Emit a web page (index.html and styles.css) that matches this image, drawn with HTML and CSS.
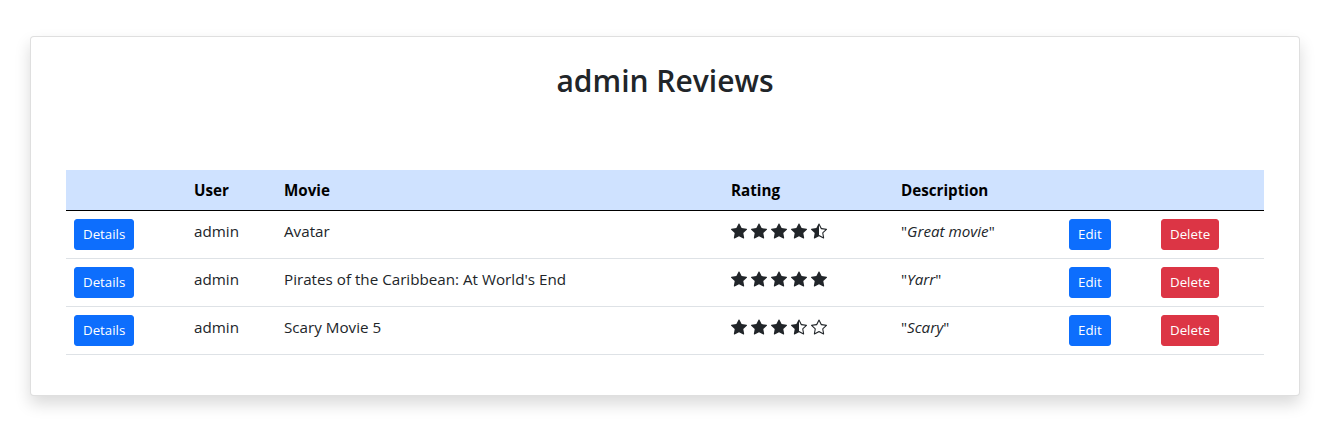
FILE: index.html
```html
<!DOCTYPE html>
<html lang="en">
<head>
<meta charset="utf-8">
<title>admin Reviews</title>
<link rel="stylesheet" href="styles.css">
</head>
<body>
<svg width="0" height="0" class="defs" aria-hidden="true">
  <defs>
    <symbol id="sf" viewBox="0 0 16 16"><path d="M3.612 15.443c-.386.198-.824-.149-.746-.592l.83-4.73L.173 6.765c-.329-.314-.158-.888.283-.95l4.898-.696L7.538.792c.197-.39.73-.39.927 0l2.184 4.327 4.898.696c.441.062.612.636.282.95l-3.522 3.356.83 4.73c.078.443-.36.79-.746.592L8 13.187l-4.389 2.256z"/></symbol>
    <symbol id="sh" viewBox="0 0 16 16"><path d="M5.354 5.119 7.538.792A.516.516 0 0 1 8 .5c.183 0 .366.097.465.292l2.184 4.327 4.898.696A.537.537 0 0 1 16 6.32a.548.548 0 0 1-.17.445l-3.523 3.356.83 4.730c.078.443-.36.79-.746.592L8 13.187l-4.389 2.256a.52.52 0 0 1-.146.05c-.342.06-.668-.254-.6-.642l.83-4.73L.173 6.765a.55.55 0 0 1-.172-.403.58.58 0 0 1 .085-.302.513.513 0 0 1 .37-.245l4.898-.696zM8 12.027a.5.5 0 0 1 .232.056l3.686 1.894-.694-3.957a.565.565 0 0 1 .162-.505l2.907-2.77-4.052-.576a.525.525 0 0 1-.393-.288L8.001 2.223 8 2.226v9.8z"/></symbol>
    <symbol id="se" viewBox="0 0 16 16"><path d="M2.866 14.85c-.078.444.36.791.746.593l4.39-2.256 4.389 2.256c.386.198.824-.149.746-.592l-.83-4.73 3.522-3.356c.33-.314.16-.888-.282-.95l-4.898-.696L8.465.792a.513.513 0 0 0-.927 0L5.354 5.12l-4.898.696c-.441.062-.612.636-.283.95l3.523 3.356-.83 4.73zm4.905-2.767-3.686 1.894.694-3.957a.565.565 0 0 0-.163-.505L1.710 6.745l4.052-.576a.525.525 0 0 0 .393-.288L8 2.223l1.847 3.658a.525.525 0 0 0 .393.288l4.052.575-2.906 2.770a.565.565 0 0 0-.163.506l.694 3.957-3.686-1.894a.503.503 0 0 0-.461 0z"/></symbol>
  </defs>
</svg>
<div class="page">
  <div class="card">
    <h2 class="title">admin Reviews</h2>
    <table class="reviews">
      <colgroup>
        <col class="c-details"><col class="c-user"><col class="c-movie"><col class="c-rating"><col class="c-desc"><col class="c-edit"><col class="c-del">
      </colgroup>
      <thead>
        <tr><th></th><th>User</th><th>Movie</th><th>Rating</th><th>Description</th><th></th><th></th></tr>
      </thead>
      <tbody>
        <tr>
          <td><button class="btn btn-primary">Details</button></td>
          <td>admin</td>
          <td>Avatar</td>
          <td><span class="stars"><svg><use href="#sf"/></svg><svg><use href="#sf"/></svg><svg><use href="#sf"/></svg><svg><use href="#sf"/></svg><svg><use href="#sh"/></svg></span></td>
          <td>"<i>Great movie</i>"</td>
          <td><button class="btn btn-primary">Edit</button></td>
          <td><button class="btn btn-danger">Delete</button></td>
        </tr>
        <tr>
          <td><button class="btn btn-primary">Details</button></td>
          <td>admin</td>
          <td>Pirates of the Caribbean: At World's End</td>
          <td><span class="stars"><svg><use href="#sf"/></svg><svg><use href="#sf"/></svg><svg><use href="#sf"/></svg><svg><use href="#sf"/></svg><svg><use href="#sf"/></svg></span></td>
          <td>"<i>Yarr</i>"</td>
          <td><button class="btn btn-primary">Edit</button></td>
          <td><button class="btn btn-danger">Delete</button></td>
        </tr>
        <tr>
          <td><button class="btn btn-primary">Details</button></td>
          <td>admin</td>
          <td>Scary Movie 5</td>
          <td><span class="stars"><svg><use href="#sf"/></svg><svg><use href="#sf"/></svg><svg><use href="#sf"/></svg><svg><use href="#sh"/></svg><svg><use href="#se"/></svg></span></td>
          <td>"<i>Scary</i>"</td>
          <td><button class="btn btn-primary">Edit</button></td>
          <td><button class="btn btn-danger">Delete</button></td>
        </tr>
      </tbody>
    </table>
  </div>
</div>
</body>
</html>
```
FILE: styles.css
```css
* { box-sizing: border-box; }
html, body { margin: 0; padding: 0; }
body {
  font-family: "Open Sans", "Noto Sans", sans-serif;
  font-size: 15.2px;
  line-height: 24px;
  color: #212529;
  background: #fff;
}
.defs { position: absolute; width: 0; height: 0; overflow: hidden; }
.page {
  padding: 36px 31px 35px 30px;
}
.card {
  background: #fff;
  border: 1px solid rgba(0,0,0,.125);
  border-radius: 4px;
  box-shadow: 0 8px 16px rgba(0,0,0,.15);
  padding: 25px 35px 24px 35px;
}
.title {
  margin: 0 0 70px;
  text-align: center;
  font-size: 30px;
  font-weight: 600;
  line-height: 38px;
}
.reviews {
  width: 100%;
  border-collapse: collapse;
  table-layout: fixed;
  margin-bottom: 16px;
  vertical-align: top;
}
.c-details { width: 120px; }
.c-user { width: 90px; }
.c-movie { width: 447px; }
.c-rating { width: 170px; }
.c-desc { width: 168px; }
.c-edit { width: 92px; }
.c-del { width: 111px; }
.reviews th, .reviews td {
  padding: 8px;
  text-align: left;
  vertical-align: top;
  white-space: nowrap;
}
.reviews thead th {
  background: #cfe2ff;
  color: #000;
  font-weight: 700;
  border-bottom: 1px solid #000;
}
.reviews tbody td {
  border-bottom: 1px solid #dee2e6;
}
.btn {
  font-family: inherit;
  font-size: 13.3px;
  line-height: 21px;
  padding: 4px 8px;
  border: 1px solid transparent;
  border-radius: 3px;
  color: #fff;
  display: inline-block;
  cursor: pointer;
}
.btn-primary { background: #0d6efd; border-color: #0d6efd; }
.btn-danger { background: #dc3545; border-color: #dc3545; }
.stars {
  display: flex;
  gap: 4px;
  padding-top: 4px;
  color: #212529;
}
.stars svg {
  width: 16px;
  height: 16px;
  fill: currentColor;
}
i { font-style: italic; }
```
